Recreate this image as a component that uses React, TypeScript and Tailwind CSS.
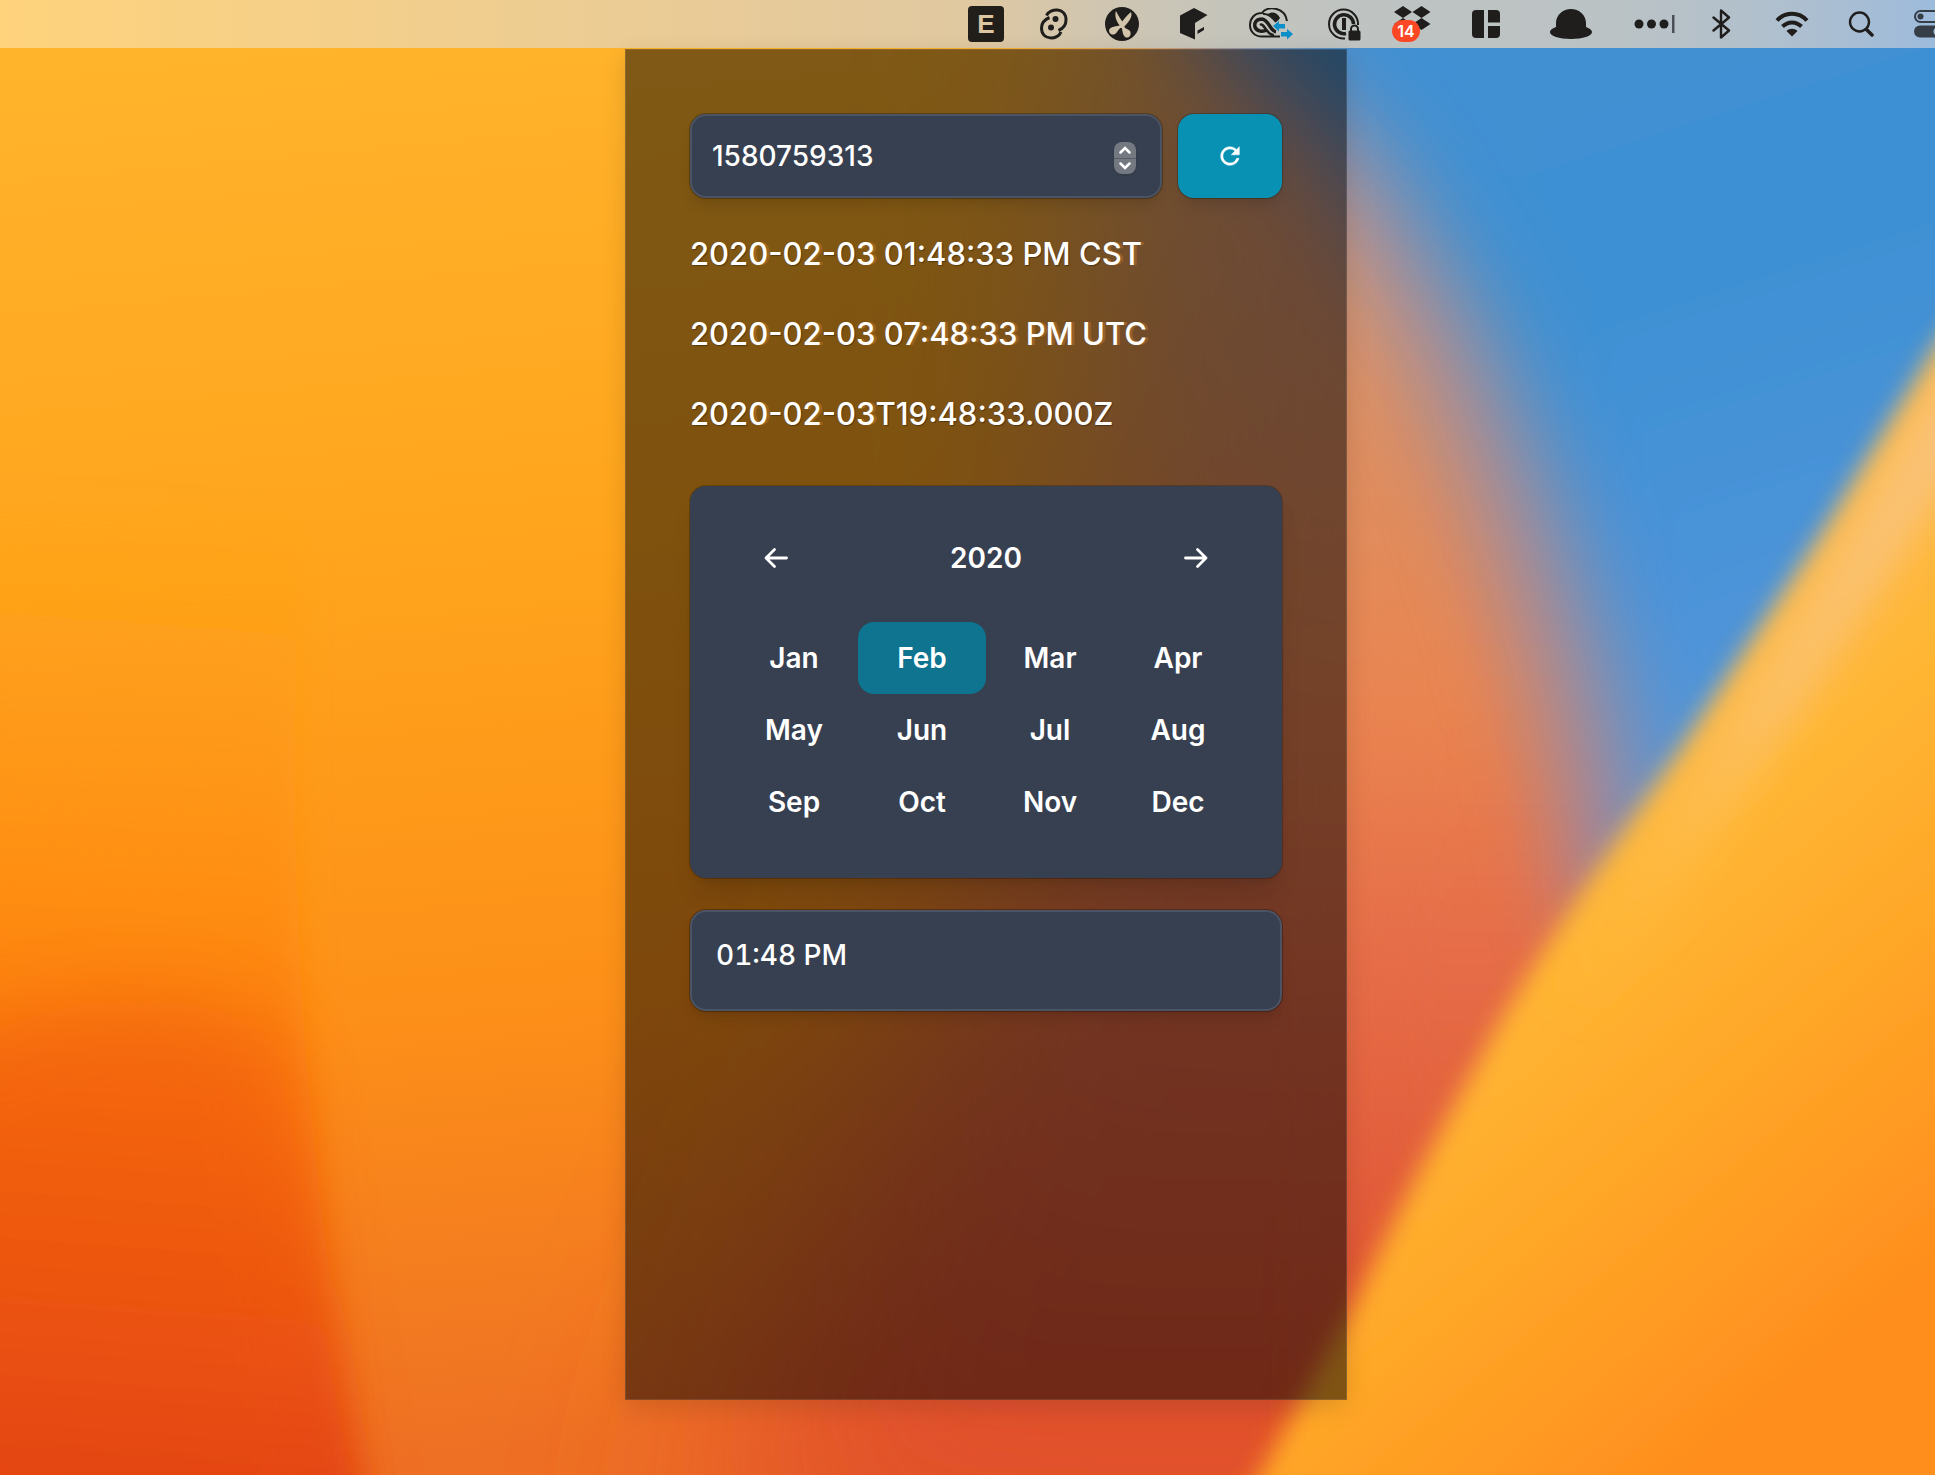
import { useState } from "react";
import type { ReactNode } from "react";

const INK = "#1f1e1c";

function Wallpaper() {
  return (
    <svg
      aria-hidden="true"
      className="absolute inset-0 h-full w-full"
      viewBox="0 0 1568 1195"
      preserveAspectRatio="none"
    >
      <defs>
        <linearGradient id="base" x1="0" y1="0" x2="0.12" y2="1">
          <stop offset="0" stopColor="#ffb62e" />
          <stop offset="0.4" stopColor="#ffa41c" />
          <stop offset="0.7" stopColor="#fd9018" />
          <stop offset="1" stopColor="#ee7024" />
        </linearGradient>
        <linearGradient id="lobe" gradientUnits="userSpaceOnUse" x1="60" y1="400" x2="0" y2="1195">
          <stop offset="0" stopColor="#ffa018" stopOpacity="0" />
          <stop offset="0.4" stopColor="#ff8c12" stopOpacity="0.8" />
          <stop offset="0.62" stopColor="#f9720f" />
          <stop offset="1" stopColor="#e24414" />
        </linearGradient>
        <linearGradient id="salmon" gradientUnits="userSpaceOnUse" x1="0" y1="60" x2="0" y2="1195">
          <stop offset="0" stopColor="#d39a78" />
          <stop offset="0.25" stopColor="#dc8f62" />
          <stop offset="0.45" stopColor="#ea8550" />
          <stop offset="0.6" stopColor="#e6704a" />
          <stop offset="0.8" stopColor="#e25c3a" />
          <stop offset="1" stopColor="#e04c28" />
        </linearGradient>
        <linearGradient id="sky" x1="0" y1="0" x2="0.3" y2="1">
          <stop offset="0" stopColor="#4890d2" />
          <stop offset="0.5" stopColor="#3c90d3" />
          <stop offset="0.75" stopColor="#4a93d9" />
          <stop offset="1" stopColor="#5a96d8" />
        </linearGradient>
        <linearGradient id="dune" gradientUnits="userSpaceOnUse" x1="1270" y1="600" x2="1600" y2="1000">
          <stop offset="0" stopColor="#ffba4a" />
          <stop offset="0.25" stopColor="#ffb634" />
          <stop offset="0.6" stopColor="#ffa526" />
          <stop offset="1" stopColor="#ff8e1e" />
        </linearGradient>
        <linearGradient id="rim" gradientUnits="userSpaceOnUse" x1="1568" y1="300" x2="1260" y2="820">
          <stop offset="0" stopColor="#f8c27c" />
          <stop offset="0.5" stopColor="#fcc166" stopOpacity="0.9" />
          <stop offset="1" stopColor="#ffb83a" stopOpacity="0" />
        </linearGradient>
        <filter id="b80" x="-60%" y="-60%" width="220%" height="220%">
          <feGaussianBlur stdDeviation="85" />
        </filter>
        <filter id="b40" x="-50%" y="-50%" width="200%" height="200%">
          <feGaussianBlur stdDeviation="38" />
        </filter>
        <filter id="b30" x="-50%" y="-50%" width="200%" height="200%">
          <feGaussianBlur stdDeviation="30" />
        </filter>
        <filter id="b14" x="-50%" y="-50%" width="200%" height="200%">
          <feGaussianBlur stdDeviation="14" />
        </filter>
        <filter id="b10" x="-50%" y="-50%" width="200%" height="200%">
          <feGaussianBlur stdDeviation="10" />
        </filter>
      </defs>
      <rect width="1568" height="1195" fill="url(#base)" />
      <path d="M-80 380 H250 C228 640 235 900 305 1260 H-80 Z" fill="url(#lobe)" filter="url(#b14)" />
      <path d="M-80 870 C40 800 170 790 225 850 L290 1260 H-80 Z" fill="#e94a10" opacity="0.35" filter="url(#b30)" />
      <path d="M900 -60 C880 200 880 380 830 600 C780 780 680 940 560 1300 H1300 L1700 300 V-60 Z" fill="url(#salmon)" filter="url(#b80)" />
      <path d="M1110 -60 C1125 300 1110 600 1080 1260 H1200 L1480 500 L1300 -60 Z" fill="url(#salmon)" filter="url(#b30)" />
      <path d="M860 -140 L950 20 L1060 150 L1130 280 L1180 404 L1220 528 L1250 644 L1270 760 L1740 400 V-140 Z" fill="#8b8bb8" opacity="0.5" filter="url(#b30)" />
      <path d="M880 -140 L1015 30 L1115 130 L1200 270 L1252 400 L1292 528 L1316 644 L1326 780 L1740 400 V-140 Z" fill="url(#sky)" filter="url(#b40)" />
      <path d="M1680 110 L1568 284 L1471 442 L1363 606 C1310 680 1262 750 1220 820 C1175 900 1140 965 1103 1045 C1075 1100 1045 1150 1015 1205 V1290 H1680 V110 Z" fill="url(#dune)" filter="url(#b10)" />
      <path d="M1700 150 L1600 310 L1501 470 L1393 634 L1250 850" fill="none" stroke="url(#rim)" strokeWidth="48" filter="url(#b14)" />
    </svg>
  );
}

function TupleIcon() {
  return (
    <svg width="28" height="32" viewBox="0 0 28 32" fill="none" stroke={INK} strokeWidth="3">
      <path d="M6.500 7.500 C10 0 26 -1 26 12 C26 18 22 21 18.500 22.500" />
      <path d="M21 24 C18 32 1.500 33 1.500 20 C1.500 14 6 11 9.500 9.500" />
      <circle cx="15.500" cy="11" r="3" fill={INK} stroke="none" />
      <circle cx="11" cy="19.500" r="3" fill={INK} stroke="none" />
    </svg>
  );
}

function ScissorsIcon() {
  return (
    <svg width="34" height="34" viewBox="0 0 34 34">
      <circle cx="17" cy="17" r="17" fill={INK} />
      <g fill="#d3c5ab">
        <path d="M11 4 C9 9 12 16 16 20 L19 17 C16 13 13 8 11 4 Z" />
        <path d="M26 5 C28 10 23 16 18 21 L13 21 C17 14 21 9 26 5 Z" />
        <path d="M17 18 C14 19 7 19 4.500 22 C3 25 6 29 10 27 C13 25 13 21 18 20 Z" />
        <path d="M16 19 C18 23 17 27 20 30 C24 32 27 28 25 24 C23 22 20 22 18 18 Z" />
      </g>
    </svg>
  );
}

function CubeIcon() {
  return (
    <svg width="28" height="32" viewBox="0 0 28 32" fill={INK}>
      <path d="M14 0 L27.500 7 L15 15 V31.500 L0 25 V7.500 Z" />
      <path d="M17.500 22.500 L24 19 V22 L17.500 26 Z" />
    </svg>
  );
}

function CloudSyncIcon() {
  return (
    <svg width="44" height="32" viewBox="0 0 44 32" fill="none" stroke={INK}>
      <path d="M38 13 C36 -1 18 -3 13 5 C5 5 1 11 1 17 C1 24 6 28.500 13 28.500 H31" strokeWidth="2" />
      <path d="M14 6 C20 5 24 10 27 14" strokeWidth="2" />
      <path d="M27 24 C21 23 20 12 13 11 C7 11 5 15 6 19 C8 24 14 24 18 22" strokeWidth="3.500" />
      <path d="M11 17 C15 14 18 28 25 27" strokeWidth="2.500" />
      <path d="M19 6 C23 3 29 5 31 10 C30 12 28 13 27 14 C25 10 22 8 19 6 Z" fill={INK} stroke="none" />
      <path d="M24 18 L30 13 V16 H36 V20.500 H30 V23.500 Z" fill="#0d8fc9" stroke="none" />
      <path d="M44 26 L38 21 V24 H32 V28.500 H38 V31.500 Z" fill="#0d8fc9" stroke="none" />
    </svg>
  );
}

function PasswordIcon() {
  return (
    <svg width="33" height="33" viewBox="0 0 33 33" fill="none" stroke={INK}>
      <path d="M17 30.500 A14.500 14.500 0 1 1 30 17" strokeWidth="2" />
      <path d="M18 25.500 A9.500 9.500 0 1 1 25.500 16" strokeWidth="3.500" />
      <path d="M16 10 V22" strokeWidth="4" />
      <rect x="20.500" y="22.500" width="12" height="10" rx="1.500" fill={INK} stroke="none" />
      <path d="M23 23 V21 A3.500 3.500 0 0 1 30 21 V23" strokeWidth="2" />
    </svg>
  );
}

function DropboxIcon() {
  return (
    <span className="relative block h-9 w-10">
      <svg width="40" height="36" viewBox="0 0 40 36" fill={INK}>
        <path d="M11 0 L20 6 L11 12 L2 6 Z M29.500 0 L38.500 6 L29.500 12 L20.500 6 Z M29.500 12 L38.500 18 L29.500 24 L20.500 18 Z M11 12 L20 18 L11 24 L2 18 Z" />
      </svg>
      <span className="absolute top-3.5 left-0 flex h-[22px] w-7 items-center justify-center rounded-full bg-[#fb4724] text-base leading-none font-semibold text-white">
        14
      </span>
    </span>
  );
}

function TilesIcon() {
  return (
    <svg width="28" height="28" viewBox="0 0 28 28" fill={INK}>
      <path d="M4 0 H12 V28 H4 A4 4 0 0 1 0 24 V4 A4 4 0 0 1 4 0 Z" />
      <path d="M16 0 H24 A4 4 0 0 1 28 4 V12.500 H16 Z" />
      <path d="M16 16 H28 V24 A4 4 0 0 1 24 28 H16 Z" />
    </svg>
  );
}

function HatIcon() {
  return (
    <svg width="42" height="30" viewBox="0 0 42 30" fill={INK}>
      <path d="M6 18 V14 C6 6 13 0 21 0 C29 0 36 6 36 14 V18 C39 19 42 21 42 23 C42 27 33 30 21 30 C9 30 0 27 0 23 C0 21 3 19 6 18 Z" />
    </svg>
  );
}

function DotsIcon() {
  return (
    <svg width="41" height="20" viewBox="0 0 41 20" fill={INK}>
      <circle cx="5" cy="10" r="4.500" />
      <circle cx="17.500" cy="10" r="4.500" />
      <circle cx="30" cy="10" r="4.500" />
      <rect x="38" y="1" width="2.500" height="18" fill="#4b5057" />
    </svg>
  );
}

function BluetoothIcon() {
  return (
    <svg width="19" height="30" viewBox="0 0 19 30" fill="none" stroke={INK} strokeWidth="2.400" strokeLinejoin="round" strokeLinecap="round">
      <path d="M1.500 8.500 L17 21.500 L9 28.500 V1.500 L17 8.500 L1.500 21.500" />
    </svg>
  );
}

function WifiIcon() {
  return (
    <svg width="34" height="26" viewBox="0 0 34 26" fill="none" stroke={INK} strokeWidth="4">
      <path d="M2 9.500 C10 0.500 24 0.500 32 9.500" />
      <path d="M7.500 15.500 C13 10 21 10 26.500 15.500" />
      <path d="M11.500 20 C14.500 17 19.500 17 22.500 20 L17 25.500 Z" fill={INK} stroke="none" />
    </svg>
  );
}

function SearchIcon() {
  return (
    <svg width="26" height="28" viewBox="0 0 26 28" fill="none" stroke={INK} strokeLinecap="round">
      <circle cx="11.500" cy="12" r="9.500" strokeWidth="2.400" />
      <path d="M18.500 19.500 L24 25" strokeWidth="3.500" />
    </svg>
  );
}

function ControlCentreIcon() {
  return (
    <svg width="36" height="28" viewBox="0 0 36 28" fill="none">
      <rect x="1" y="1" width="34" height="11" rx="5.500" stroke="#353d47" strokeWidth="2" />
      <circle cx="6.500" cy="6.500" r="3" fill="#353d47" />
      <rect x="0" y="15.500" width="36" height="12" rx="6" fill="#353d47" />
      <circle cx="24" cy="21.500" r="4.500" fill="#a5bfda" />
    </svg>
  );
}

function LetterIcon() {
  return (
    <span className="flex size-9 items-center justify-center rounded-sm bg-[#221e1a] font-['Liberation_Sans'] text-[26px] leading-none font-bold text-[#dcc7a2]">
      E
    </span>
  );
}

const menuItems: { label: string; slot: string; icon: ReactNode }[] = [
  { label: "Editor", slot: "w-[66px]", icon: <LetterIcon /> },
  { label: "Pairing", slot: "w-[70px]", icon: <TupleIcon /> },
  { label: "Snippets", slot: "w-[66px]", icon: <ScissorsIcon /> },
  { label: "Packages", slot: "w-[78px]", icon: <CubeIcon /> },
  { label: "Cloud sync", slot: "w-[76px]", icon: <CloudSyncIcon /> },
  { label: "Passwords", slot: "w-[70px]", icon: <PasswordIcon /> },
  { label: "Dropbox", slot: "w-[66px]", icon: <DropboxIcon /> },
  { label: "Window tiles", slot: "w-[82px]", icon: <TilesIcon /> },
  { label: "Bowler", slot: "w-[88px]", icon: <HatIcon /> },
  { label: "Hidden items", slot: "w-[78px]", icon: <DotsIcon /> },
  { label: "Bluetooth", slot: "w-[56px]", icon: <BluetoothIcon /> },
  { label: "Wi-Fi", slot: "w-[86px]", icon: <WifiIcon /> },
  { label: "Search", slot: "w-[52px]", icon: <SearchIcon /> },
];

function MenuBar() {
  return (
    <header className="relative flex h-12 items-stretch justify-end overflow-hidden bg-linear-to-r from-[#ffd37c] via-[#e0c8a0] via-50% to-[#9dbbdc]">
      <div className="absolute inset-0 bg-linear-to-r from-transparent from-50% via-[#bdc3c3] via-75% to-transparent" />
      <nav aria-label="Menu bar" className="relative flex">
        {menuItems.map((item) => (
          <button
            key={item.label}
            type="button"
            aria-label={item.label}
            className={`flex shrink-0 items-center justify-center ${item.slot}`}
          >
            {item.icon}
          </button>
        ))}
        <button type="button" aria-label="Control Centre" className="flex w-12 items-center overflow-hidden pl-[27px]">
          <span className="block w-9 shrink-0">
            <ControlCentreIcon />
          </span>
        </button>
      </nav>
    </header>
  );
}

const ghost = "[text-shadow:3px_0_0_rgba(190,120,50,0.45)]";

function TimeLine({ children }: { children: ReactNode }) {
  return (
    <p className="flex h-20 items-center text-[31px] font-medium whitespace-pre text-white [text-shadow:1px_1px_1px_rgba(0,0,0,0.35)]">
      <span>{children}</span>
    </p>
  );
}

function RefreshIcon() {
  return (
    <svg width="28" height="28" viewBox="0 0 24 24" fill="white" stroke="white" strokeWidth="0.400">
      <path d="M17.650 6.350A7.958 7.958 0 0 0 12 4c-4.420 0-7.990 3.580-7.990 8s3.570 8 7.990 8c3.730 0 6.840-2.550 7.730-6h-2.080A5.990 5.990 0 0 1 12 18c-3.310 0-6-2.690-6-6s2.690-6 6-6c1.660 0 3.140.690 4.220 1.780L13 11h7V4l-2.350 2.350z" />
    </svg>
  );
}

function Arrow({ flip = false }: { flip?: boolean }) {
  return (
    <svg
      width="24"
      height="22"
      viewBox="0 0 24 22"
      fill="none"
      stroke="white"
      strokeWidth="2.800"
      strokeLinecap="round"
      strokeLinejoin="round"
      className={flip ? "rotate-180" : ""}
    >
      <path d="M22.500 11 H2 M10.500 2.500 L2 11 L10.500 19.500" />
    </svg>
  );
}

const months = ["Jan", "Feb", "Mar", "Apr", "May", "Jun", "Jul", "Aug", "Sep", "Oct", "Nov", "Dec"];

export default function App() {
  const [stamp, setStamp] = useState(1580759313);
  const [year, setYear] = useState(2020);
  const [month, setMonth] = useState("Feb");
  const [time, setTime] = useState("01:48 PM");

  return (
    <div className="relative flex min-h-screen flex-col overflow-hidden font-[Inter,sans-serif]">
      <Wallpaper />
      <MenuBar />
      <main className="relative flex flex-1 justify-center pt-px pb-[75px] pl-[37px]">
        <section className="w-[722px] max-w-full border border-white/10 bg-black/50 px-16 py-16 shadow-[0_8px_24px_rgba(0,0,0,0.12)]">
          <div className="flex gap-4">
            <div className="relative flex-1">
              <input
                type="number"
                aria-label="Unix timestamp"
                value={stamp}
                onChange={(e) => setStamp(Number(e.target.value))}
                className="h-[84px] w-full appearance-none rounded-2xl border-2 border-[#4a5464] bg-[#374050] pr-14 pl-5 text-[28px] font-medium text-white shadow-lg ring-1 ring-black/25 [appearance:textfield] [&::-webkit-inner-spin-button]:appearance-none"
              />
              <div className="absolute top-7 right-[26px] flex h-8 w-[22px] flex-col overflow-hidden rounded-lg bg-[#737881] shadow-sm">
                <button type="button" aria-label="Increase" onClick={() => setStamp(stamp + 1)} className="flex flex-1 items-center justify-center border-b border-[#565b65]">
                  <svg width="12" height="8" viewBox="0 0 12 8" fill="none" stroke="white" strokeWidth="2.500" strokeLinecap="round">
                    <path d="M1.500 6.500 L6 2 L10.500 6.500" />
                  </svg>
                </button>
                <button type="button" aria-label="Decrease" onClick={() => setStamp(stamp - 1)} className="flex flex-1 items-center justify-center">
                  <svg width="12" height="8" viewBox="0 0 12 8" fill="none" stroke="white" strokeWidth="2.500" strokeLinecap="round">
                    <path d="M1.500 1.500 L6 6 L10.500 1.500" />
                  </svg>
                </button>
              </div>
            </div>
            <button type="button" aria-label="Refresh" className="flex w-[104px] items-center justify-center rounded-2xl bg-[#0891b2] shadow-lg ring-1 ring-black/20">
              <RefreshIcon />
            </button>
          </div>

          <div className="mt-4">
            <TimeLine>
              202<span className={ghost}>0</span>-0<span className={ghost}>2</span>-0<span className={ghost}>3</span> 01:48:33 PM C<span className={ghost}>ST</span>
            </TimeLine>
            <TimeLine>
              202<span className={ghost}>0</span>-0<span className={ghost}>2</span>-0<span className={ghost}>3</span> 0<span className={ghost}>7:48:33 PM UTC</span>
            </TimeLine>
            <TimeLine>
              202<span className={ghost}>0</span>-0<span className={ghost}>2</span>-0<span className={ghost}>3</span>T19:48:33.000Z
            </TimeLine>
          </div>

          <div className="mt-8 rounded-2xl bg-[#374050] p-10 text-[28px] font-semibold text-white shadow-xl ring-1 ring-black/20">
            <div className="mb-8 flex h-16 items-center justify-between">
              <button type="button" aria-label="Previous year" onClick={() => setYear(year - 1)} className="flex h-full w-[92px] items-center justify-center">
                <Arrow />
              </button>
              <h2>{year}</h2>
              <button type="button" aria-label="Next year" onClick={() => setYear(year + 1)} className="flex h-full w-[92px] items-center justify-center">
                <Arrow flip />
              </button>
            </div>
            <div className="grid grid-cols-4">
              {months.map((m) => (
                <button
                  key={m}
                  type="button"
                  aria-pressed={m === month}
                  onClick={() => setMonth(m)}
                  className={`h-[72px] rounded-2xl ${m === month ? "bg-[#0e7490]" : ""}`}
                >
                  {m}
                </button>
              ))}
            </div>
          </div>

          <input
            type="text"
            aria-label="Time"
            value={time}
            onChange={(e) => setTime(e.target.value)}
            className="mt-8 h-[101px] w-full rounded-2xl border-2 border-[#4a5464] bg-[#374050] px-6 pb-3 text-[28px] font-medium text-white tabular-nums shadow-lg ring-1 ring-black/25"
          />
        </section>
      </main>
    </div>
  );
}
